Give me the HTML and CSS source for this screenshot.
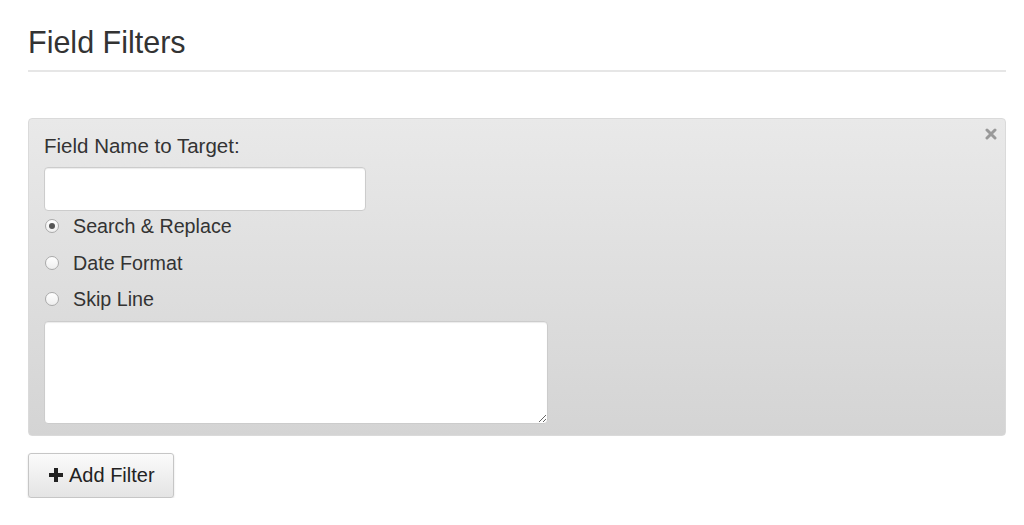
FILE: index.html
```html
<!DOCTYPE html>
<html>
<head>
<meta charset="utf-8">
<link rel="stylesheet" href="styles.css">
</head>
<body>
<div class="page">
  <h1 class="title">Field Filters</h1>
  <div class="filter-panel">
    <svg class="close" width="12" height="12" viewBox="0 0 12 12"><path d="M2 2L10 10M10 2L2 10" stroke="#999" stroke-width="3" stroke-linecap="round"/></svg>
    <label class="field-label">Field Name to Target:</label>
    <input class="text-input" type="text">
    <div class="radios">
      <label class="radio-row"><span class="radio checked"></span>Search &amp; Replace</label>
      <label class="radio-row"><span class="radio"></span>Date Format</label>
      <label class="radio-row"><span class="radio"></span>Skip Line</label>
    </div>
    <textarea class="text-area"></textarea>
  </div>
  <button class="add-btn"><svg class="plus" width="14" height="14" viewBox="0 0 14 14"><path d="M5 0h4v5h5v4H9v5H5V9H0V5h5z" fill="#222"/></svg>Add Filter</button>
</div>
</body>
</html>
```
FILE: styles.css
```css
* { box-sizing: border-box; }
html, body { margin: 0; background: #fff; }
body { font-family: "Liberation Sans", Arial, sans-serif; color: #333; }
.page { padding: 22px 18px 0 28px; display: flex; flex-direction: column; align-items: flex-start; }
.title {
  margin: 0; font-weight: 400; font-size: 30.5px; line-height: 40px; color: #333;
  align-self: stretch; padding-bottom: 8px; border-bottom: 2px solid #e6e6e6;
}
.filter-panel {
  position: relative; align-self: stretch; margin-top: 46px;
  background: linear-gradient(#e9e9e9, #d4d4d4);
  border: 1px solid #dadada; border-radius: 4px;
  padding: 13px 15px 11px 15px;
  display: flex; flex-direction: column; align-items: flex-start;
}
.close { position: absolute; top: 9px; right: 8px; }
.field-label { font-size: 20.5px; line-height: 28px; color: #333; margin-bottom: 7px; }
.text-input {
  width: 322px; height: 44px; border: 1px solid #ccc; border-radius: 4px; background: #fff;
  box-shadow: inset 0 1px 1px rgba(0,0,0,0.08);
}
.radios { display: flex; flex-direction: column; margin-top: -3px; }
.radio-row { display: flex; align-items: center; font-size: 19.7px; line-height: 36.5px; height: 36.5px; color: #333; }
.radio {
  width: 14px; height: 14px; border-radius: 50%; border: 1px solid #aaa;
  background: linear-gradient(#fff, #eee); margin: 0 14px 0 1px; position: relative;
}
.radio.checked::after {
  content: ""; position: absolute; left: 3px; top: 3px; width: 6px; height: 6px; border-radius: 50%; background: #555;
}
.text-area {
  margin-top: 3px; width: 504px; height: 103px; border: 1px solid #ccc; border-radius: 4px; background: #fff;
  box-shadow: inset 0 1px 1px rgba(0,0,0,0.08);
}
.add-btn {
  margin-top: 17px; height: 45px; width: 146px; padding: 0 0 0 20px;
  display: flex; align-items: center; justify-content: flex-start; gap: 6px;
  font-family: "Liberation Sans", Arial, sans-serif; font-size: 20px; color: #222;
  background: linear-gradient(#fbfbfb, #e4e4e4); border: 1px solid #c6c6c6; border-radius: 3px;
  box-shadow: 0 1px 2px rgba(0,0,0,0.15);
}
```
